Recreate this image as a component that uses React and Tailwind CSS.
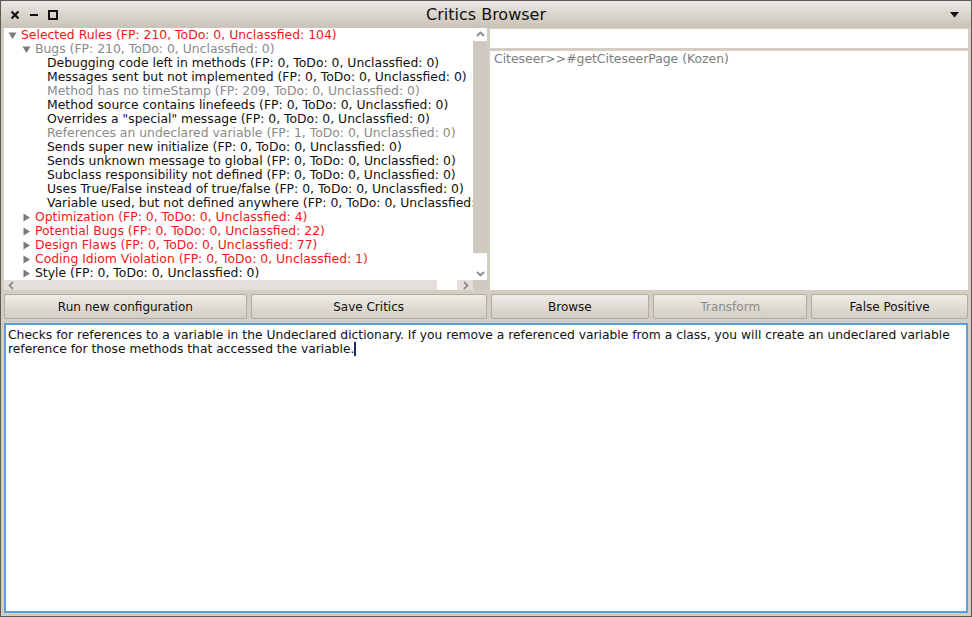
import React from 'react';

// Critics Browser window (Pharo style)
const RED = 'text-[#f01818]';
const GRAY = 'text-[#8a8a8a]';
const BLACK = 'text-[#111]';

const rows = [
  { level: 0, tri: 'down', color: RED, text: 'Selected Rules (FP: 210, ToDo: 0, Unclassfied: 104)' },
  { level: 1, tri: 'down', color: GRAY, text: 'Bugs (FP: 210, ToDo: 0, Unclassfied: 0)' },
  { level: 2, color: BLACK, text: 'Debugging code left in methods (FP: 0, ToDo: 0, Unclassfied: 0)' },
  { level: 2, color: BLACK, text: 'Messages sent but not implemented (FP: 0, ToDo: 0, Unclassfied: 0)' },
  { level: 2, color: GRAY, text: 'Method has no timeStamp (FP: 209, ToDo: 0, Unclassfied: 0)' },
  { level: 2, color: BLACK, text: 'Method source contains linefeeds (FP: 0, ToDo: 0, Unclassfied: 0)' },
  { level: 2, color: BLACK, text: 'Overrides a "special" message (FP: 0, ToDo: 0, Unclassfied: 0)' },
  { level: 2, color: GRAY, text: 'References an undeclared variable (FP: 1, ToDo: 0, Unclassfied: 0)' },
  { level: 2, color: BLACK, text: 'Sends super new initialize (FP: 0, ToDo: 0, Unclassfied: 0)' },
  { level: 2, color: BLACK, text: 'Sends unknown message to global (FP: 0, ToDo: 0, Unclassfied: 0)' },
  { level: 2, color: BLACK, text: 'Subclass responsibility not defined (FP: 0, ToDo: 0, Unclassfied: 0)' },
  { level: 2, color: BLACK, text: 'Uses True/False instead of true/false (FP: 0, ToDo: 0, Unclassfied: 0)' },
  { level: 2, color: BLACK, text: 'Variable used, but not defined anywhere (FP: 0, ToDo: 0, Unclassfied: 0)' },
  { level: 1, tri: 'right', color: RED, text: 'Optimization (FP: 0, ToDo: 0, Unclassfied: 4)' },
  { level: 1, tri: 'right', color: RED, text: 'Potential Bugs (FP: 0, ToDo: 0, Unclassfied: 22)' },
  { level: 1, tri: 'right', color: RED, text: 'Design Flaws (FP: 0, ToDo: 0, Unclassfied: 77)' },
  { level: 1, tri: 'right', color: RED, text: 'Coding Idiom Violation (FP: 0, ToDo: 0, Unclassfied: 1)' },
  { level: 1, tri: 'right', color: BLACK, text: 'Style (FP: 0, ToDo: 0, Unclassfied: 0)' },
];

function Triangle({ dir }) {
  if (dir === 'down') {
    return (
      <svg width="9" height="9" viewBox="0 0 9 9" className="shrink-0">
        <path d="M0.5 1.5 L8.5 1.5 L4.5 8 Z" fill="#7a7a7a" />
      </svg>
    );
  }
  return (
    <svg width="9" height="9" viewBox="0 0 9 9" className="shrink-0">
      <path d="M1.5 0.5 L8 4.5 L1.5 8.5 Z" fill="#7a7a7a" />
    </svg>
  );
}

function TreeRow({ row }) {
  const pad = row.level === 0 ? 'pl-[4px]' : row.level === 1 ? 'pl-[18px]' : 'pl-[43px]';
  return (
    <div className={`h-[14px] flex items-center whitespace-nowrap ${pad}`}>
      {row.tri && <Triangle dir={row.tri} />}
      <span className={`${row.tri ? 'ml-[4px]' : ''} ${row.color}`}>{row.text}</span>
    </div>
  );
}

function Chevron({ dir }) {
  const d = {
    up: 'M1 6 L4.5 2.5 L8 6',
    down: 'M1 3 L4.5 6.5 L8 3',
    left: 'M6 1 L2.5 4.5 L6 8',
    right: 'M3 1 L6.5 4.5 L3 8',
  }[dir];
  return (
    <svg width="9" height="9" viewBox="0 0 9 9">
      <path d={d} stroke="#8d8d8d" strokeWidth="1.8" fill="none" />
    </svg>
  );
}

function Button({ label, width, disabled }) {
  return (
    <div
      className={`${width} h-[25px] flex items-center justify-center border border-[#b2aca2] rounded-[2px] bg-gradient-to-b from-[#eeebe6] to-[#d3cec5] text-[12px] ${disabled ? 'text-[#8a8a8a]' : 'text-[#111]'}`}
    >
      {label}
    </div>
  );
}

export default function App() {
  return (
    <div
      className="w-[972px] h-[617px] flex flex-col border border-[#5a5a5a] bg-[#d3cdc4] overflow-hidden"
      style={{ fontFamily: '"DejaVu Sans", sans-serif' }}
    >
      {/* title bar */}
      <div className="h-[27px] shrink-0 flex items-center bg-gradient-to-b from-[#ebe8e3] to-[#c9c2b7]">
        <div className="w-[80px] flex items-center gap-[9px] pl-[9px] text-[#111]">
          <svg width="10" height="10" viewBox="0 0 10 10">
            <path d="M1.5 1.5 L8.5 8.5 M8.5 1.5 L1.5 8.5" stroke="#111" strokeWidth="2.2" />
          </svg>
          <svg width="10" height="10" viewBox="0 0 10 10">
            <path d="M1 5 L9 5" stroke="#111" strokeWidth="2" />
          </svg>
          <svg width="10" height="10" viewBox="0 0 10 10">
            <rect x="1" y="1" width="8" height="8" stroke="#111" strokeWidth="2" fill="none" />
          </svg>
        </div>
        <div className="flex-1 text-center text-[16px] text-[#111]">Critics Browser</div>
        <div className="w-[80px] flex justify-end">
          <svg width="9" height="6" viewBox="0 0 9 6" className="mr-[12px]">
            <path d="M0 0 L9 0 L4.5 5.5 Z" fill="#111" />
          </svg>
        </div>
      </div>

      <div className="flex-1 flex flex-col px-[3px] pb-[3px]">
        {/* upper panes */}
        <div className="h-[262px] flex gap-[3px]">
          {/* tree pane */}
          <div className="w-[483px] flex flex-col">
            <div className="flex-1 flex">
              <div className="flex-1 bg-white overflow-hidden text-[12.4px] leading-[14px]">
                {rows.map((r, i) => (
                  <TreeRow key={i} row={r} />
                ))}
              </div>
              <div className="w-[14px] flex flex-col bg-[#cfc9bf]">
                <div className="h-[13px] bg-white flex items-center justify-center">
                  <Chevron dir="up" />
                </div>
                <div className="flex-1" />
                <div className="h-[27px] bg-white flex items-end justify-center pb-[2px]">
                  <Chevron dir="down" />
                </div>
              </div>
            </div>
            <div className="h-[12px] flex bg-[#e3e0db]">
              <div className="w-[14px] flex items-center justify-center">
                <Chevron dir="left" />
              </div>
              <div className="flex-1" />
              <div className="w-[20px] bg-white" />
              <div className="w-[16px] flex items-center justify-center">
                <Chevron dir="right" />
              </div>
              <div className="w-[14px] bg-[#cfc9bf]" />
            </div>
          </div>

          {/* right pane */}
          <div className="flex-1 flex flex-col gap-[3px] pt-[1px]">
            <div className="h-[19px] bg-white" />
            <div className="flex-1 bg-white px-[4px] pt-[1px] text-[12.4px] leading-[14px] text-[#7d7d7d]">
              Citeseer&gt;&gt;#getCiteseerPage (Kozen)
            </div>
          </div>
        </div>

        {/* buttons */}
        <div className="mt-[4px] flex">
          <Button label="Run new configuration" width="w-[243px]" />
          <div className="w-[4px]" />
          <Button label="Save Critics" width="w-[236px]" />
          <div className="w-[4px]" />
          <Button label="Browse" width="w-[159px]" />
          <div className="w-[4px]" />
          <Button label="Transform" width="w-[154px]" disabled />
          <div className="w-[4px]" />
          <Button label="False Positive" width="w-[157px]" />
        </div>

        {/* description */}
        <div className="mt-[4px] flex-1 border-2 border-[#5c9fdc] bg-white px-[2px] pt-[3px] text-[12.3px] leading-[14px] text-[#111]">
          Checks for references to a variable in the Undeclared dictionary. If you remove a referenced variable from a class, you will create an undeclared variable reference for those methods that accessed the variable.
          <span className="inline-block w-[2px] h-[14px] bg-[#1a2a6a] align-top" />
        </div>
      </div>
    </div>
  );
}
